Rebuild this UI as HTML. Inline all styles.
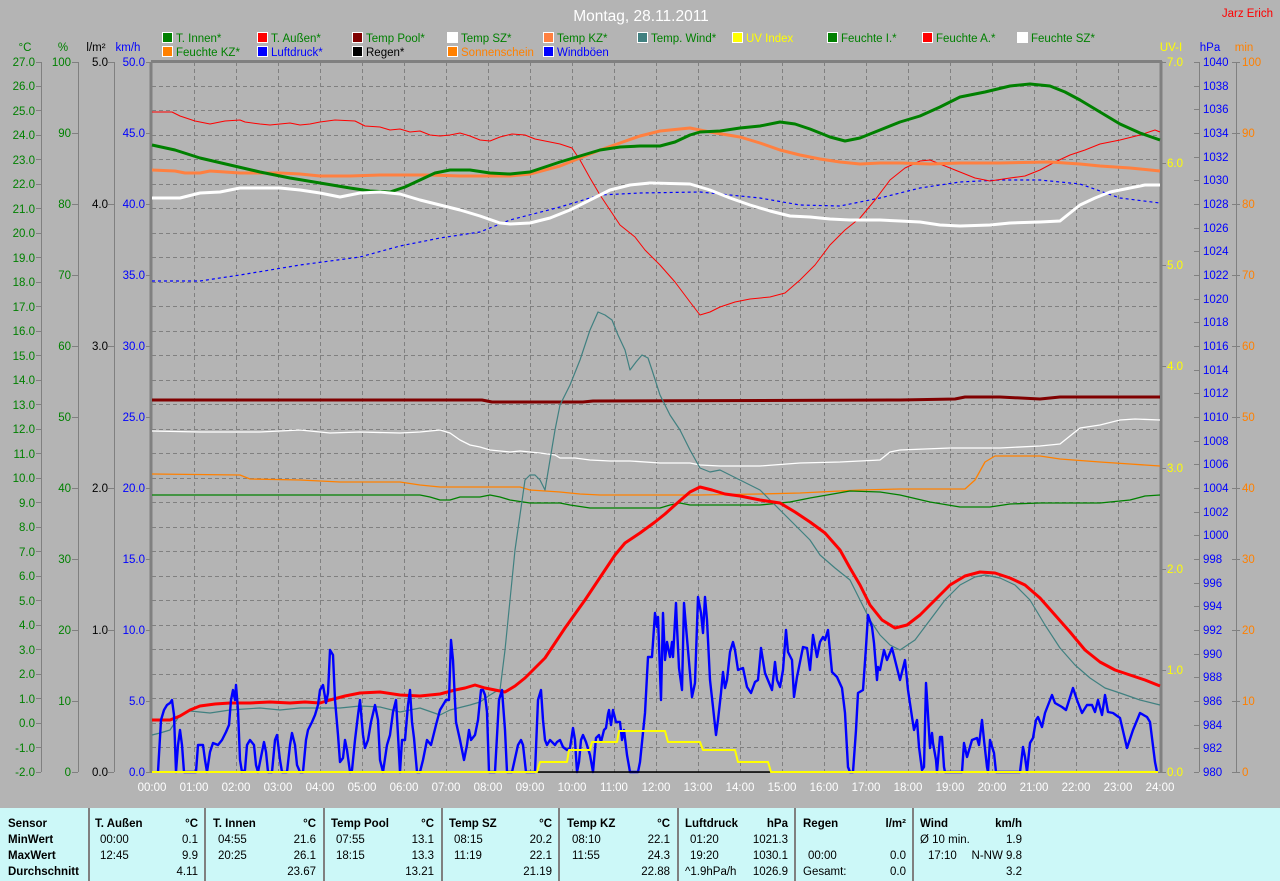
<!DOCTYPE html>
<html><head><meta charset="utf-8"><style>
html,body{margin:0;padding:0;background:#b4b4b4;}
svg{display:block;font-family:"Liberation Sans",sans-serif;}
</style></head><body>
<svg width="1280" height="881" viewBox="0 0 1280 881" xmlns="http://www.w3.org/2000/svg">
<rect x="0" y="0" width="1280" height="881" fill="#b4b4b4"/>
<text x="641" y="21" font-size="15.5" fill="#ffffff" text-anchor="middle">Montag, 28.11.2011</text>
<text x="1273" y="17" font-size="11.5" fill="#ff0000" text-anchor="end">Jarz Erich</text>

<g font-size="11.5">
<g stroke="#fff" stroke-width="1">
<rect x="162.5" y="32.5" width="10" height="10" fill="#008000"/>
<rect x="257.5" y="32.5" width="10" height="10" fill="#ff0000"/>
<rect x="352.5" y="32.5" width="10" height="10" fill="#800000"/>
<rect x="447.5" y="32.5" width="10" height="10" fill="#ffffff"/>
<rect x="543.5" y="32.5" width="10" height="10" fill="#ff8040"/>
<rect x="637.5" y="32.5" width="10" height="10" fill="#408080"/>
<rect x="732.5" y="32.5" width="10" height="10" fill="#ffff00"/>
<rect x="827.5" y="32.5" width="10" height="10" fill="#008000"/>
<rect x="922.5" y="32.5" width="10" height="10" fill="#ff0000"/>
<rect x="1017.5" y="32.5" width="10" height="10" fill="#ffffff"/>
<rect x="162.5" y="46.5" width="10" height="10" fill="#ff8000"/>
<rect x="257.5" y="46.5" width="10" height="10" fill="#0000ff"/>
<rect x="352.5" y="46.5" width="10" height="10" fill="#000000"/>
<rect x="447.5" y="46.5" width="10" height="10" fill="#ff8000"/>
<rect x="543.5" y="46.5" width="10" height="10" fill="#0000ff"/>
</g>
<text x="176" y="42" fill="#008000">T. Innen*</text>
<text x="271" y="42" fill="#008000">T. Außen*</text>
<text x="366" y="42" fill="#008000">Temp Pool*</text>
<text x="461" y="42" fill="#008000">Temp SZ*</text>
<text x="557" y="42" fill="#008000">Temp KZ*</text>
<text x="651" y="42" fill="#008000">Temp. Wind*</text>
<text x="746" y="42" fill="#ffff00">UV Index</text>
<text x="841" y="42" fill="#008000">Feuchte I.*</text>
<text x="936" y="42" fill="#008000">Feuchte A.*</text>
<text x="1031" y="42" fill="#008000">Feuchte SZ*</text>
<text x="176" y="56" fill="#008000">Feuchte KZ*</text>
<text x="271" y="56" fill="#0000ff">Luftdruck*</text>
<text x="366" y="56" fill="#000000">Regen*</text>
<text x="461" y="56" fill="#ff8000">Sonnenschein</text>
<text x="557" y="56" fill="#0000ff">Windböen</text>
</g>

<g font-size="11.5">
<text x="25" y="51" fill="#008000" text-anchor="middle">°C</text>
<text x="63" y="51" fill="#008000" text-anchor="middle">%</text>
<text x="96" y="51" fill="#000" text-anchor="middle">l/m²</text>
<text x="128" y="51" fill="#0000ff" text-anchor="middle">km/h</text>
<text x="1171" y="51" fill="#ffff00" text-anchor="middle">UV-I</text>
<text x="1210" y="51" fill="#0000ff" text-anchor="middle">hPa</text>
<text x="1244" y="51" fill="#ff8000" text-anchor="middle">min</text>
</g>

<g stroke="#808080" stroke-width="1" stroke-dasharray="4,3">
<path d="M194.5 62V772M236.5 62V772M278.5 62V772M320.5 62V772M362.5 62V772M404.5 62V772M446.5 62V772M488.5 62V772M530.5 62V772M572.5 62V772M614.5 62V772M656.5 62V772M698.5 62V772M740.5 62V772M782.5 62V772M824.5 62V772M866.5 62V772M908.5 62V772M950.5 62V772M992.5 62V772M1034.5 62V772M1076.5 62V772M1118.5 62V772"/>
<path d="M152 86.5H1160M152 110.5H1160M152 135.5H1160M152 159.5H1160M152 184.5H1160M152 208.5H1160M152 233.5H1160M152 257.5H1160M152 282.5H1160M152 306.5H1160M152 331.5H1160M152 355.5H1160M152 380.5H1160M152 404.5H1160M152 429.5H1160M152 453.5H1160M152 478.5H1160M152 502.5H1160M152 527.5H1160M152 551.5H1160M152 576.5H1160M152 600.5H1160M152 625.5H1160M152 649.5H1160M152 674.5H1160M152 698.5H1160M152 723.5H1160M152 747.5H1160"/>
</g>
<g stroke="#808080" fill="none">
<path d="M151 62V773" stroke-width="3"/>
<path d="M151 61.5H1162" stroke-width="3"/>
<path d="M1161 61V773" stroke-width="3"/>
<path d="M152 772.5H1160" stroke-width="1"/>
<path d="M41.5 62V772M78.5 62V772M114.5 62V772M1199.5 62V772M1236.5 62V772" stroke-width="1"/>
</g>

<g font-size="11.5" fill="#008000" text-anchor="end">
<text x="35" y="66">27.0</text><text x="35" y="90">26.0</text><text x="35" y="115">25.0</text><text x="35" y="139">24.0</text><text x="35" y="164">23.0</text><text x="35" y="188">22.0</text><text x="35" y="213">21.0</text><text x="35" y="237">20.0</text><text x="35" y="262">19.0</text><text x="35" y="286">18.0</text><text x="35" y="311">17.0</text><text x="35" y="335">16.0</text><text x="35" y="360">15.0</text><text x="35" y="384">14.0</text><text x="35" y="409">13.0</text><text x="35" y="433">12.0</text><text x="35" y="458">11.0</text><text x="35" y="482">10.0</text><text x="35" y="507">9.0</text><text x="35" y="531">8.0</text><text x="35" y="556">7.0</text><text x="35" y="580">6.0</text><text x="35" y="605">5.0</text><text x="35" y="629">4.0</text><text x="35" y="654">3.0</text><text x="35" y="678">2.0</text><text x="35" y="703">1.0</text><text x="35" y="727">0.0</text><text x="35" y="752">-1.0</text><text x="35" y="776">-2.0</text>
</g>
<g stroke="#808080"><path d="M36 62.5H41M36 86.5H41M36 110.5H41M36 135.5H41M36 159.5H41M36 184.5H41M36 208.5H41M36 233.5H41M36 257.5H41M36 282.5H41M36 306.5H41M36 331.5H41M36 355.5H41M36 380.5H41M36 404.5H41M36 429.5H41M36 453.5H41M36 478.5H41M36 502.5H41M36 527.5H41M36 551.5H41M36 576.5H41M36 600.5H41M36 625.5H41M36 649.5H41M36 674.5H41M36 698.5H41M36 723.5H41M36 747.5H41M36 772.5H41"/>
<path d="M72 62.5H78M72 133.5H78M72 204.5H78M72 275.5H78M72 346.5H78M72 417.5H78M72 488.5H78M72 559.5H78M72 630.5H78M72 701.5H78M72 772.5H78"/>
<path d="M108 62.5H114M108 204.5H114M108 346.5H114M108 488.5H114M108 630.5H114M108 772.5H114"/>
<path d="M146 62.5H151M146 133.5H151M146 204.5H151M146 275.5H151M146 346.5H151M146 417.5H151M146 488.5H151M146 559.5H151M146 630.5H151M146 701.5H151M146 772.5H151"/>
<path d="M1162 62.5H1166M1162 163.5H1166M1162 265.5H1166M1162 366.5H1166M1162 468.5H1166M1162 569.5H1166M1162 670.5H1166M1162 772.5H1166"/>
<path d="M1194 62.5H1199M1194 86.5H1199M1194 109.5H1199M1194 133.5H1199M1194 157.5H1199M1194 180.5H1199M1194 204.5H1199M1194 228.5H1199M1194 251.5H1199M1194 275.5H1199M1194 299.5H1199M1194 322.5H1199M1194 346.5H1199M1194 370.5H1199M1194 393.5H1199M1194 417.5H1199M1194 441.5H1199M1194 464.5H1199M1194 488.5H1199M1194 512.5H1199M1194 535.5H1199M1194 559.5H1199M1194 583.5H1199M1194 606.5H1199M1194 630.5H1199M1194 654.5H1199M1194 677.5H1199M1194 701.5H1199M1194 725.5H1199M1194 748.5H1199M1194 772.5H1199"/>
<path d="M1232 62.5H1240M1232 133.5H1240M1232 204.5H1240M1232 275.5H1240M1232 346.5H1240M1232 417.5H1240M1232 488.5H1240M1232 559.5H1240M1232 630.5H1240M1232 701.5H1240M1232 772.5H1240"/>
</g>
<g font-size="11.5" fill="#008000" text-anchor="end">
<text x="71" y="66">100</text><text x="71" y="137">90</text><text x="71" y="208">80</text><text x="71" y="279">70</text><text x="71" y="350">60</text><text x="71" y="421">50</text><text x="71" y="492">40</text><text x="71" y="563">30</text><text x="71" y="634">20</text><text x="71" y="705">10</text><text x="71" y="776">0</text>
</g>
<g font-size="11.5" fill="#000" text-anchor="end">
<text x="108" y="66">5.0</text><text x="108" y="208">4.0</text><text x="108" y="350">3.0</text><text x="108" y="492">2.0</text><text x="108" y="634">1.0</text><text x="108" y="776">0.0</text>
</g>
<g font-size="11.5" fill="#0000ff" text-anchor="end">
<text x="145" y="66">50.0</text><text x="145" y="137">45.0</text><text x="145" y="208">40.0</text><text x="145" y="279">35.0</text><text x="145" y="350">30.0</text><text x="145" y="421">25.0</text><text x="145" y="492">20.0</text><text x="145" y="563">15.0</text><text x="145" y="634">10.0</text><text x="145" y="705">5.0</text><text x="145" y="776">0.0</text>
</g>
<g font-size="11.5" fill="#ffff00">
<text x="1167" y="66">7.0</text><text x="1167" y="167">6.0</text><text x="1167" y="269">5.0</text><text x="1167" y="370">4.0</text><text x="1167" y="472">3.0</text><text x="1167" y="573">2.0</text><text x="1167" y="674">1.0</text><text x="1167" y="776">0.0</text>
</g>
<g font-size="11.5" fill="#0000ff">
<text x="1203" y="66">1040</text><text x="1203" y="90">1038</text><text x="1203" y="113">1036</text><text x="1203" y="137">1034</text><text x="1203" y="161">1032</text><text x="1203" y="184">1030</text><text x="1203" y="208">1028</text><text x="1203" y="232">1026</text><text x="1203" y="255">1024</text><text x="1203" y="279">1022</text><text x="1203" y="303">1020</text><text x="1203" y="326">1018</text><text x="1203" y="350">1016</text><text x="1203" y="374">1014</text><text x="1203" y="397">1012</text><text x="1203" y="421">1010</text><text x="1203" y="445">1008</text><text x="1203" y="468">1006</text><text x="1203" y="492">1004</text><text x="1203" y="516">1002</text><text x="1203" y="539">1000</text><text x="1203" y="563">998</text><text x="1203" y="587">996</text><text x="1203" y="610">994</text><text x="1203" y="634">992</text><text x="1203" y="658">990</text><text x="1203" y="681">988</text><text x="1203" y="705">986</text><text x="1203" y="729">984</text><text x="1203" y="752">982</text><text x="1203" y="776">980</text>
</g>
<g font-size="11.5" fill="#ff8000">
<text x="1242" y="66">100</text><text x="1242" y="137">90</text><text x="1242" y="208">80</text><text x="1242" y="279">70</text><text x="1242" y="350">60</text><text x="1242" y="421">50</text><text x="1242" y="492">40</text><text x="1242" y="563">30</text><text x="1242" y="634">20</text><text x="1242" y="705">10</text><text x="1242" y="776">0</text>
</g>
<g font-size="11.5" fill="#ffffff" text-anchor="middle">
<text x="152" y="791">00:00</text><text x="194" y="791">01:00</text><text x="236" y="791">02:00</text><text x="278" y="791">03:00</text><text x="320" y="791">04:00</text><text x="362" y="791">05:00</text><text x="404" y="791">06:00</text><text x="446" y="791">07:00</text><text x="488" y="791">08:00</text><text x="530" y="791">09:00</text><text x="572" y="791">10:00</text><text x="614" y="791">11:00</text><text x="656" y="791">12:00</text><text x="698" y="791">13:00</text><text x="740" y="791">14:00</text><text x="782" y="791">15:00</text><text x="824" y="791">16:00</text><text x="866" y="791">17:00</text><text x="908" y="791">18:00</text><text x="950" y="791">19:00</text><text x="992" y="791">20:00</text><text x="1034" y="791">21:00</text><text x="1076" y="791">22:00</text><text x="1118" y="791">23:00</text><text x="1160" y="791">24:00</text>
</g>

<g fill="none" stroke-linejoin="round">
<polyline stroke="#0000ff" stroke-width="1.2" stroke-dasharray="3,3" points="152,281 200,281 240,275 300,265 360,257 400,246 440,238 480,232 510,220 560,207 600,195 640,193 700,192 760,198 800,205 840,206 880,198 920,188 960,182 1000,180 1040,180 1080,184 1120,198 1160,203"/>
<polyline stroke="#ff0000" stroke-width="1" points="152,112 172,112 180,116 195,121 210,124 225,121 240,120 245,122 260,124 270,125 280,124 290,123 300,125 310,124 320,122 335,120 355,121 365,126 380,127 390,130 400,129 410,132 420,131 430,135 440,136 450,135 460,133 470,136 480,140 490,141 500,137 512,134 525,135 535,139 550,142 560,144 572,148 580,160 590,178 600,195 610,210 620,225 635,237 645,250 660,265 675,282 690,302 700,315 710,312 720,307 735,302 750,299 770,297 785,293 800,280 815,265 830,245 845,230 860,218 875,200 890,180 905,168 920,161 930,160 945,166 960,172 975,178 990,181 1010,178 1025,176 1040,170 1055,162 1070,155 1085,150 1100,144 1120,140 1140,135 1155,130 1160,132"/>
<polyline stroke="#ff8040" stroke-width="3" points="152,170 175,171 185,173 200,173 210,171 225,172 240,173 260,173 280,173 300,174 320,176 350,176 380,175 400,175 430,175 460,176 480,176 510,176 530,174 560,166 580,158 600,150 620,143 640,136 660,131 690,128 710,132 740,137 760,143 780,150 800,155 820,159 840,162 860,164 880,163 900,163 930,164 960,163 1000,163 1050,162 1080,164 1100,166 1130,168 1160,171"/>
<polyline stroke="#008000" stroke-width="3" points="152,145 175,150 200,158 230,165 260,172 290,178 320,183 350,188 370,191 390,192 405,187 420,180 435,173 450,170 470,170 490,173 510,174 530,172 560,162 580,156 600,150 620,147 640,146 660,146 675,142 690,135 700,132 720,131 740,128 760,126 780,122 795,124 810,129 830,137 845,141 860,138 880,130 900,122 920,116 940,107 960,97 985,92 1010,86 1030,84 1050,86 1065,92 1080,100 1100,112 1120,124 1140,133 1160,140"/>
<polyline stroke="#ffffff" stroke-width="3" points="152,198 180,198 200,193 220,192 240,188 260,188 280,188 300,190 320,193 340,197 360,193 380,192 400,194 420,200 440,205 460,210 480,216 500,223 510,224 530,223 550,218 570,210 590,200 610,190 630,185 650,183 690,184 710,190 730,198 750,205 770,211 790,216 810,217 830,219 850,220 880,220 900,221 920,222 940,225 960,226 990,225 1010,223 1040,222 1060,221 1070,213 1080,205 1095,198 1110,192 1130,188 1145,185 1160,185"/>
<polyline stroke="#800000" stroke-width="3" points="152,400 482,400 492,402 583,402 593,401 900,400 955,399 965,397 1000,397 1040,399 1060,397 1160,397"/>
<polyline stroke="#ffffff" stroke-width="1.3" points="152,431 200,432 260,432 300,430 330,433 360,432 400,433 420,432 440,430 450,433 460,440 470,445 480,447 490,450 510,452 520,451 540,453 555,455 560,458 575,458 590,460 610,461 630,461 660,463 690,463 700,465 720,466 760,466 800,463 840,462 880,460 890,452 900,450 950,448 1000,448 1040,446 1060,444 1070,436 1080,428 1100,425 1120,420 1135,419 1160,420"/>
<polyline stroke="#ff8000" stroke-width="1.3" points="152,474 240,475 250,479 300,480 340,482 360,482 400,482 420,485 440,487 520,487 530,490 560,492 580,494 600,495 640,495 700,495 760,494 800,493 840,491 860,490 900,489 940,489 965,489 975,480 985,462 995,456 1040,456 1060,459 1100,462 1130,464 1160,466"/>
<polyline stroke="#008000" stroke-width="1.3" points="152,495 400,495 420,495 430,497 440,500 450,500 460,497 480,497 490,495 500,497 510,500 530,503 560,503 570,505 590,508 620,508 660,508 670,505 680,503 690,505 720,505 740,505 760,505 790,502 810,498 850,491 880,492 900,495 930,502 960,507 990,507 1010,504 1040,503 1100,503 1130,500 1145,496 1160,495"/>
<polyline stroke="#408080" stroke-width="1.2" points="152,735 160,733 170,730 180,715 190,711 210,713 230,710 260,708 280,710 300,708 320,708 340,708 360,706 380,707 400,712 420,708 440,715 450,710 470,705 480,702 490,695 495,692 500,690 505,650 510,600 515,550 520,515 525,480 530,475 535,475 540,480 545,490 550,460 555,430 560,405 570,385 580,360 590,330 598,312 605,315 612,320 618,335 625,350 630,370 636,362 642,355 648,358 652,370 660,395 670,415 680,430 690,450 700,468 710,472 720,470 730,475 740,480 750,485 760,490 770,500 780,510 795,525 810,540 820,555 835,568 850,580 860,600 870,620 880,635 890,645 900,650 915,640 930,620 945,600 960,585 975,577 985,575 1000,578 1015,585 1030,600 1045,625 1060,648 1075,665 1090,678 1105,688 1120,693 1140,700 1160,705"/>
<polyline stroke="#ff0000" stroke-width="3" points="152,720 170,720 180,716 190,710 200,706 215,704 230,703 250,703 270,702 290,703 305,702 320,703 330,700 345,696 360,693 380,692 400,695 420,696 440,694 455,690 465,688 475,685 485,688 495,690 505,692 515,686 525,678 535,668 545,658 555,643 565,628 575,614 585,600 595,585 605,570 615,555 625,543 640,533 655,522 665,514 675,505 690,492 700,487 712,490 725,494 740,496 760,500 780,503 795,512 810,522 825,533 840,550 850,568 860,585 870,605 882,620 895,628 907,625 920,615 935,600 950,585 965,576 980,572 995,573 1010,578 1025,585 1040,598 1055,615 1070,632 1085,650 1100,662 1115,670 1130,675 1145,680 1160,686"/>
<polyline stroke="#0000ff" stroke-width="2.4" points="158,772 161,720 164,710 167,705 170,703 172,700 174,715 176,772 178,745 180,730 182,745 184,772 196,772 198,745 203,745 205,760 207,772 210,752 213,743 218,745 222,740 226,732 229,725 231,700 233,690 235,700 236,685 238,710 240,760 242,772 245,770 247,745 250,740 254,745 256,765 258,772 262,752 264,742 266,752 268,772 272,772 275,740 277,735 280,760 282,772 287,772 290,745 292,733 295,745 297,765 300,772 303,772 306,740 308,730 312,722 315,715 318,705 320,690 323,685 326,703 328,693 330,650 333,655 335,700 338,735 340,762 343,758 345,740 347,750 350,772 352,770 355,740 358,715 360,700 363,735 365,748 368,740 371,722 375,705 378,720 380,760 383,772 387,745 390,735 393,712 396,700 398,735 400,772 402,740 405,740 408,705 410,690 412,722 414,738 417,772 420,772 423,760 427,740 431,745 436,725 440,710 443,705 446,700 449,700 451,640 453,660 456,722 460,740 464,760 467,745 469,730 471,740 475,735 478,720 481,690 483,690 485,695 487,712 489,772 495,772 499,700 502,690 505,730 507,772 512,772 518,745 521,740 523,745 526,772 535,772 538,700 541,690 543,720 545,740 547,745 550,740 555,745 557,742 560,740 563,747 567,750 570,748 573,728 575,740 577,772 579,762 581,740 583,735 586,742 590,755 593,772 596,738 599,735 601,742 604,730 606,728 608,714 609,710 611,725 613,710 616,722 620,722 622,740 624,730 627,755 630,772 638,772 640,762 645,713 648,657 652,657 655,613 657,627 658,617 661,700 663,613 665,660 667,642 670,657 672,642 673,657 676,603 677,627 679,668 682,690 684,603 686,627 688,650 692,697 695,683 698,597 701,613 703,633 705,597 707,620 710,680 713,707 716,735 718,720 721,693 723,672 725,688 727,680 730,652 733,642 735,650 738,670 743,668 747,687 751,693 755,682 758,680 761,648 765,673 772,690 775,662 777,680 780,687 783,670 786,630 788,652 792,660 794,697 797,677 803,647 807,648 810,670 813,635 817,657 820,642 823,637 825,640 828,630 832,672 837,677 842,688 845,713 848,767 850,772 853,772 856,730 858,693 863,690 866,647 868,615 872,627 874,643 877,680 878,667 880,670 884,650 887,660 892,648 895,660 900,680 905,660 908,690 912,717 914,730 917,720 919,747 922,770 924,767 926,683 927,698 930,748 932,733 933,743 936,760 937,772 940,737 942,737 944,767 945,772 962,772 964,743 967,757 972,740 977,738 979,745 982,720 984,740 987,767 988,772 990,740 994,753 996,772 1020,772 1023,747 1025,757 1027,772 1030,743 1033,738 1036,720 1038,717 1042,727 1045,713 1052,695 1055,703 1062,707 1066,710 1073,688 1077,700 1082,713 1087,705 1092,705 1095,712 1098,700 1102,715 1105,695 1108,712 1113,713 1120,718 1127,748 1133,730 1140,713 1147,717 1150,722 1155,762 1157,772"/>
<polyline stroke="#000" stroke-width="1.5" points="537,772 770,772"/>
<polyline stroke="#ffff00" stroke-width="2" points="152,772 537,772 540,762 567,762 569,750 590,750 592,742 617,742 619,731 665,731 668,742 700,742 703,750 735,750 738,762 768,762 771,772 1158,772"/>
</g>

<rect x="0" y="808" width="1280" height="73" fill="#ccf8f8"/>
<g stroke="#808080" stroke-width="2"><path d="M89 808V881M205 808V881M324 808V881M442 808V881M559 808V881M678 808V881M795 808V881M913 808V881"/></g>
<g font-size="11.5" font-weight="bold" fill="#000">
<text x="8" y="827">Sensor</text><text x="8" y="843">MinWert</text><text x="8" y="859">MaxWert</text><text x="8" y="875">Durchschnitt</text>
<text x="95" y="827">T. Außen</text><text x="198" y="827" text-anchor="end">°C</text>
<text x="213" y="827">T. Innen</text><text x="316" y="827" text-anchor="end">°C</text>
<text x="331" y="827">Temp Pool</text><text x="434" y="827" text-anchor="end">°C</text>
<text x="449" y="827">Temp SZ</text><text x="552" y="827" text-anchor="end">°C</text>
<text x="567" y="827">Temp KZ</text><text x="670" y="827" text-anchor="end">°C</text>
<text x="685" y="827">Luftdruck</text><text x="788" y="827" text-anchor="end">hPa</text>
<text x="803" y="827">Regen</text><text x="906" y="827" text-anchor="end">l/m²</text>
<text x="920" y="827">Wind</text><text x="1022" y="827" text-anchor="end">km/h</text>
</g>
<g font-size="11.5" fill="#000">
<text x="100" y="843">00:00</text><text x="198" y="843" text-anchor="end">0.1</text>
<text x="100" y="859">12:45</text><text x="198" y="859" text-anchor="end">9.9</text>
<text x="198" y="875" text-anchor="end">4.11</text>
<text x="218" y="843">04:55</text><text x="316" y="843" text-anchor="end">21.6</text>
<text x="218" y="859">20:25</text><text x="316" y="859" text-anchor="end">26.1</text>
<text x="316" y="875" text-anchor="end">23.67</text>
<text x="336" y="843">07:55</text><text x="434" y="843" text-anchor="end">13.1</text>
<text x="336" y="859">18:15</text><text x="434" y="859" text-anchor="end">13.3</text>
<text x="434" y="875" text-anchor="end">13.21</text>
<text x="454" y="843">08:15</text><text x="552" y="843" text-anchor="end">20.2</text>
<text x="454" y="859">11:19</text><text x="552" y="859" text-anchor="end">22.1</text>
<text x="552" y="875" text-anchor="end">21.19</text>
<text x="572" y="843">08:10</text><text x="670" y="843" text-anchor="end">22.1</text>
<text x="572" y="859">11:55</text><text x="670" y="859" text-anchor="end">24.3</text>
<text x="670" y="875" text-anchor="end">22.88</text>
<text x="690" y="843">01:20</text><text x="788" y="843" text-anchor="end">1021.3</text>
<text x="690" y="859">19:20</text><text x="788" y="859" text-anchor="end">1030.1</text>
<text x="685" y="875">^1.9hPa/h</text><text x="788" y="875" text-anchor="end">1026.9</text>
<text x="808" y="859">00:00</text><text x="906" y="859" text-anchor="end">0.0</text>
<text x="803" y="875">Gesamt:</text><text x="906" y="875" text-anchor="end">0.0</text>
<text x="920" y="843">Ø 10 min.</text><text x="1022" y="843" text-anchor="end">1.9</text>
<text x="928" y="859">17:10</text><text x="1022" y="859" text-anchor="end">N-NW 9.8</text>
<text x="1022" y="875" text-anchor="end">3.2</text>
</g>
</svg>
</body></html>
